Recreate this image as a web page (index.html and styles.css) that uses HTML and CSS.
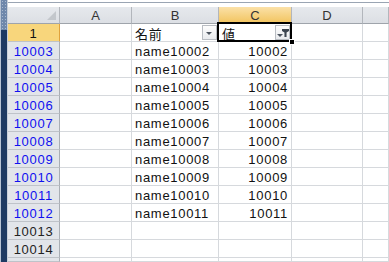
FILE: index.html
```html
<!DOCTYPE html>
<html lang="ja">
<head>
    <meta charset="UTF-8">
    <title>Sheet1</title>
    <link rel="stylesheet" href="styles.css">
</head>
<body>

    <div class="window">
        <div class="edge">
            <div class="edge-grip"></div>
        </div>
        <div class="sheet">
            <div class="topbar"></div>
            <div class="grid">
                <div class="hd corner"><span class="corner-tri"></span></div>
                <div class="hd col">A</div>
                <div class="hd col">B</div>
                <div class="hd col sel">C</div>
                <div class="hd col">D</div>
                <div class="hd col"></div>

                <div class="rh sel">1</div>
                <div class="c"></div>
                <div class="c filter">名前<span class="fbtn"><span class="arrow"></span></span></div>
                <div class="c filter active">値<span class="fbtn on"><span class="arrow"></span><span class="funnel"></span></span><span class="handle"></span></div>
                <div class="c"></div>
                <div class="c"></div>

                <div class="rh hit">10003</div><div class="c"></div><div class="c">name10002</div><div class="c num">10002</div><div class="c"></div><div class="c"></div>
                <div class="rh hit">10004</div><div class="c"></div><div class="c">name10003</div><div class="c num">10003</div><div class="c"></div><div class="c"></div>
                <div class="rh hit">10005</div><div class="c"></div><div class="c">name10004</div><div class="c num">10004</div><div class="c"></div><div class="c"></div>
                <div class="rh hit">10006</div><div class="c"></div><div class="c">name10005</div><div class="c num">10005</div><div class="c"></div><div class="c"></div>
                <div class="rh hit">10007</div><div class="c"></div><div class="c">name10006</div><div class="c num">10006</div><div class="c"></div><div class="c"></div>
                <div class="rh hit">10008</div><div class="c"></div><div class="c">name10007</div><div class="c num">10007</div><div class="c"></div><div class="c"></div>
                <div class="rh hit">10009</div><div class="c"></div><div class="c">name10008</div><div class="c num">10008</div><div class="c"></div><div class="c"></div>
                <div class="rh hit">10010</div><div class="c"></div><div class="c">name10009</div><div class="c num">10009</div><div class="c"></div><div class="c"></div>
                <div class="rh hit">10011</div><div class="c"></div><div class="c">name10010</div><div class="c num">10010</div><div class="c"></div><div class="c"></div>
                <div class="rh hit">10012</div><div class="c"></div><div class="c">name10011</div><div class="c num">10011</div><div class="c"></div><div class="c"></div>
                <div class="rh">10013</div><div class="c"></div><div class="c"></div><div class="c"></div><div class="c"></div><div class="c"></div>
                <div class="rh">10014</div><div class="c"></div><div class="c"></div><div class="c"></div><div class="c"></div><div class="c"></div>
                <div class="rh"></div><div class="c"></div><div class="c"></div><div class="c"></div><div class="c"></div><div class="c"></div>
            </div>
        </div>
    </div>

</body>
</html>
```

FILE: styles.css
```css
* {
    box-sizing: border-box;
}
html, body {
    margin: 0;
    height: 100%;
    overflow: hidden;
    background: #fff;
}
body {
    font-family: "Liberation Sans", "Noto Sans CJK JP", sans-serif;
    font-size: 13px;
    color: #111;
}
.window {
    display: flex;
    height: 262px;
    overflow: hidden;
}
.edge {
    width: 8px;
    flex: none;
    background: #1e3a62;
    border-left: 1px solid #b8c4d4;
    border-right: 1px solid #c9d0d9;
}
.edge-grip {
    height: 30px;
    background-color: #6f88ab;
    background-image: radial-gradient(circle, #a9b9cf 0.7px, transparent 0.8px);
    background-size: 3px 3px;
    background-position: 0 18px;
}
.sheet {
    flex: 1;
    display: flex;
    flex-direction: column;
    min-width: 0;
}
.topbar {
    height: 7px;
    flex: none;
    background: #fff;
    border-top: 2px solid #fff;
    box-shadow: inset 0 1px 0 #9aa5b3;
}
.grid {
    display: grid;
    grid-template-columns: 52px 72px 87px 73px 71px 1fr;
    grid-template-rows: 17px repeat(13, 18px) 4px;
}
.grid > div {
    border-right: 1px solid #d6d9dd;
    border-bottom: 1px solid #d6d9dd;
    white-space: nowrap;
    overflow: visible;
    display: flex;
    align-items: center;
    padding-top: 1px;
    letter-spacing: 0.7px;
}
.hd {
    background: linear-gradient(#e6e9ed, #dcdfe4);
    border-right-color: #b2b6bc !important;
    border-bottom-color: #9fa4ab !important;
    justify-content: center;
    color: #333;
    letter-spacing: 0 !important;
}
.hd.sel {
    background: linear-gradient(#fbe1a8, #f2c45f);
    border-bottom-color: #e8a23f !important;
}
.corner {
    position: relative;
}
.corner-tri {
    position: absolute;
    right: 3px;
    bottom: 3px;
    width: 0;
    height: 0;
    border-left: 9px solid transparent;
    border-bottom: 9px solid #c3c7cc;
}
.rh {
    background: #e2e5ea;
    border-right-color: #a9aeb5 !important;
    border-bottom-color: #bfc3c9 !important;
    justify-content: center;
    color: #222;
}
.rh.hit {
    color: #1010f0;
}
.rh.sel {
    background: #f8d67c;
    border-right-color: #e0a23c !important;
    color: #111;
}
.c {
    padding-left: 3px;
}
.c.num {
    justify-content: flex-end;
    padding-right: 3px;
}
.filter {
    position: relative;
}
.fbtn {
    position: absolute;
    right: 1px;
    top: 1px;
    width: 15px;
    height: 15px;
    background: linear-gradient(#fdfdfd, #e9ebee);
    border: 1px solid #b9bdc3;
}
.fbtn .arrow {
    position: absolute;
    left: 3px;
    top: 6px;
    border-left: 3px solid transparent;
    border-right: 3px solid transparent;
    border-top: 3px solid #4d5560;
}
.fbtn.on .arrow {
    left: 1px;
    top: 8px;
}
.fbtn .funnel {
    position: absolute;
    left: 6px;
    top: 3px;
    width: 7px;
    height: 8px;
    background: #3c4550;
    clip-path: polygon(0 0, 100% 0, 100% 25%, 65% 45%, 65% 100%, 35% 100%, 35% 45%, 0 25%);
}
.active {
    position: relative;
}
.active::after {
    content: "";
    position: absolute;
    left: -2px;
    top: -2px;
    right: -1px;
    bottom: -1px;
    border: 2px solid #000;
    pointer-events: none;
}
.handle {
    position: absolute;
    right: -4px;
    bottom: -4px;
    width: 6px;
    height: 6px;
    background: #000;
    border: 1px solid #fff;
    z-index: 2;
}
```
